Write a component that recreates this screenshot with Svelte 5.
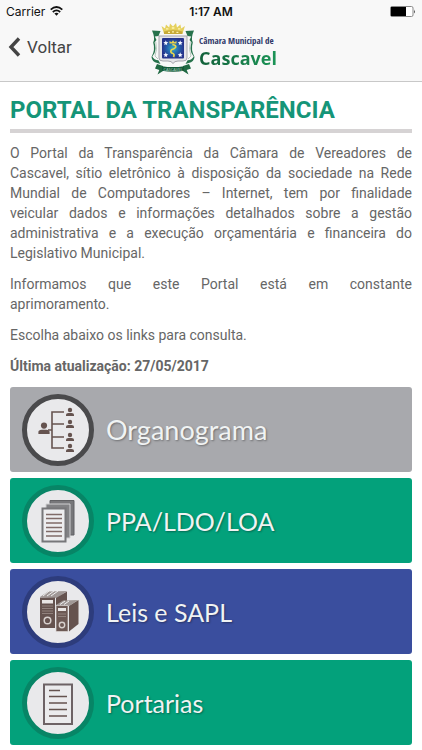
<script lang="ts">
  type Section = {
    id: 'orgchart' | 'pages' | 'binders' | 'sheet';
    label: string;
    tone: 'gray' | 'green' | 'blue';
  };

  const sections: Section[] = [
    { id: 'orgchart', label: 'Organograma', tone: 'gray' },
    { id: 'pages', label: 'PPA/LDO/LOA', tone: 'green' },
    { id: 'binders', label: 'Leis e SAPL', tone: 'blue' },
    { id: 'sheet', label: 'Portarias', tone: 'green' }
  ];

  const people = [
    [44, 8],
    [44, 20],
    [44, 33],
    [44, 44]
  ];
</script>

{#snippet person(x: number, y: number, scale: number)}
  <g transform="translate({x} {y}) scale({scale})">
    <circle cx="0" cy="4" r="2.2" />
    <path d="M-4 10V8.6Q-4 7.2-1.6 7H1.6Q4 7.2 4 8.6V10Z" />
  </g>
{/snippet}

<header>
  <div class="status">
    <div class="carrier">
      <span>Carrier</span>
      <svg width="13" height="10" viewBox="0 0 13 10" aria-hidden="true">
        <g fill="none" stroke="#111" stroke-width="1.7">
          <path d="M.7 3.7Q6.5-1.7 12.3 3.7" />
          <path d="M2.8 6Q6.5 2.6 10.2 6" />
        </g>
        <path d="M4.4 7.5Q6.5 5.9 8.6 7.5L6.5 9.7Z" fill="#111" />
      </svg>
    </div>
    <time>1:17 AM</time>
    <svg class="battery" width="26" height="11" viewBox="0 0 26 11" aria-hidden="true">
      <rect x=".5" y=".5" width="22.5" height="10" rx="1.5" fill="#fff" stroke="#888" />
      <rect x="1" y="1" width="15" height="9" fill="#000" />
      <path d="M24 3.5Q25.5 5.5 24 7.5Z" fill="#333" />
    </svg>
  </div>

  <nav>
    <button type="button" class="back">
      <svg width="13" height="20" viewBox="0 0 13 20" aria-hidden="true">
        <path d="M11 1.5 3 10l8 8.5" fill="none" stroke="#444" stroke-width="3.4" />
      </svg>
      <span>Voltar</span>
    </button>

    <div class="brand">
      <svg width="44" height="54" viewBox="0 0 44 54" aria-hidden="true">
        <defs>
          <radialGradient id="shield">
            <stop offset="0" stop-color="#35b3c4" />
            <stop offset=".55" stop-color="#2463ad" />
            <stop offset="1" stop-color="#25338c" />
          </radialGradient>
        </defs>
        <!-- mural crown -->
        <path d="M10.5 4 14 6.5 15 2.5 18.2 5.5 19 1.5 22 4.5 25 1 26 5.5 29.4 2.5 30.2 6.5 34 4 31.5 11.5H13Z" fill="#e5d05d" />
        <path d="M13 9.5Q22 7 31.4 9.5V12H13Z" fill="#c7aa38" />
        <path d="M15 6.8h2.4M20.8 6h2.6M27 6.8h2.4M17 10.3h2M21 9.8h2M25.4 10.3h2" stroke="#fff4ad" stroke-width="1.3" />
        <!-- side ribbons -->
        <path d="M1 8.5 9.5 9 7.5 14 3.8 14.5 5.5 18 3.5 20.5Q5.5 26 3.6 31L1.3 34.5Q3 38 7.4 38.3L9.5 42 6.3 41Q1 40 .5 35 4.5 28 2.2 20.5Q4.5 16 1 8.5Z" fill="#27724c" />
        <path d="M43 8.5 34.5 9 36.5 14 40.2 14.5 38.5 18 40.5 20.5Q38.5 26 40.4 31L42.7 34.5Q41 38 36.6 38.3L34.5 42 37.7 41Q43 40 43.5 35 39.5 28 41.8 20.5Q39.5 16 43 8.5Z" fill="#27724c" />
        <path d="M4.8 20Q6.5 28 4 34L7 37M39.2 20Q37.5 28 40 34L37 37" fill="none" stroke="#b7c9be" />
        <!-- shield -->
        <path d="M8 14H36V36Q36 39 32 39H27Q23.5 39 22 41.5Q20.5 39 17 39H12Q8 39 8 36Z" fill="#e4e4e8" stroke="#a6a6ad" />
        <rect x="11" y="16" width="22" height="20.5" rx="1" fill="url(#shield)" />
        <path d="M14.8 18.2 15.5 20 17.3 20.3 15.9 21.4 16.2 23.2 14.8 22.2 13.3 23.2 13.7 21.4 12.3 20.3 14.1 20ZM29.2 18.2 29.9 20 31.7 20.3 30.3 21.4 30.6 23.2 29.2 22.2 27.7 23.2 28.1 21.4 26.7 20.3 28.5 20ZM14.8 30.3 15.5 32.1 17.3 32.4 15.9 33.5 16.2 35.3 14.8 34.3 13.3 35.3 13.7 33.5 12.3 32.4 14.1 32.1ZM29.2 30.3 29.9 32.1 31.7 32.4 30.3 33.5 30.6 35.3 29.2 34.3 27.7 35.3 28.1 33.5 26.7 32.4 28.5 32.1Z" fill="#f2f6ff" />
        <path d="M18.5 21.5V19L20.5 20.3 22 18.2 23.5 20.3 25.5 19V21.5Z" fill="#ead24a" />
        <path d="M21.3 22.5Q25.7 23.2 24.5 25.5 23 27 20.5 27.8 18.8 30 21.3 31.2 24 32 22.5 35" fill="none" stroke="#e9d74c" stroke-width="1.7" />
        <!-- motto scroll -->
        <path d="M6 42 12 44V49L6.5 52.5 8.3 48 4 46.5ZM38 42 32 44V49L37.5 52.5 35.7 48 40 46.5Z" fill="#206943" />
        <path d="M11 44.2Q22 46 33 44.2V48.8Q22 50.5 11 48.8Z" fill="#155a39" />
        <text x="22" y="48.7" text-anchor="middle">CASCAVEL</text>
      </svg>
      <div class="brand-name">
        <span class="chamber">Câmara Municipal de</span>
        <strong>Cascavel</strong>
      </div>
    </div>
  </nav>
</header>

<main>
  <h1>PORTAL DA TRANSPARÊNCIA</h1>
  <p>
    O Portal da Transparência da Câmara de Vereadores de Cascavel, sítio eletrônico à disposição da
    sociedade na Rede Mundial de Computadores – Internet, tem por finalidade veicular&nbsp;dados e
    informações detalhados sobre a gestão administrativa e a execução orçamentária e financeira do
    Legislativo Municipal.
  </p>
  <p>
    <span class="full-line">Informamos que este Portal está em constante</span>
    aprimoramento.
  </p>
  <p>Escolha abaixo os links para consulta.</p>
  <p><b>Última atualização: 27/05/2017</b></p>

  <div class="sections">
    {#each sections as section}
      <a href="#{section.id}" class="card {section.tone}">
        <span class="badge">
          <svg width="62" height="62" viewBox="1 1 62 62" aria-hidden="true">
            {#if section.id === 'orgchart'}
              <g fill="#65534f">
                {@render person(18, 22, 1.4)}
                {#each people as [x, y]}
                  {@render person(x, y, 1)}
                {/each}
              </g>
              <path d="M38 14H26V50H38M22 32H26M26 26H38M26 39H38" fill="none" stroke="#65534f" stroke-width="1.6" />
            {:else if section.id === 'pages'}
              <path d="M24 11.5H48V46H24Z" fill="#77777a" stroke="#616164" />
              <path d="M20 15H44V49H20Z" fill="#828285" stroke="#d0d0d2" />
              <path d="M16.5 19.5H39.5V52.5H16.5Z" fill="#ededef" stroke="#77777a" stroke-width="2" />
              <path d="M20 25.5H36M20 29.5H36M20 34H36M20 38.5H36M20 42.5H36M20 47H36" stroke="#806b68" stroke-width="1.3" />
            {:else if section.id === 'binders'}
              <path d="M14 17 22 11.5 41 11 31 18Z" fill="#a09896" />
              <path d="M17 16 23 11M21 16 28 11M25 16 32 11" stroke="#eee" />
              <path d="M14 17.5H29V48H14Z" fill="#65534f" />
              <path d="M30 18 41 11.5V23L33 27V48H30Z" fill="#65534f" />
              <path d="M16 20H27V23.5H16Z" fill="#e8e5e4" />
              <path d="M16 26H27M16 28.5H27M16 31H27M16 33.5H27" stroke="#91827d" />
              <circle cx="21.5" cy="40.5" r="3.3" fill="none" stroke="#d7d0cd" stroke-width="1.5" />
              <path d="M30 25 37 20.5 52 20 43 26Z" fill="#a09896" />
              <path d="M34 24.5 39 21M38 24.5 43 21" stroke="#eee" />
              <path d="M30 25.5H42V51.5H30Z" fill="#6c5954" stroke="#dcd8d7" stroke-width=".7" />
              <path d="M43 26 52.5 20V44L43 51.5Z" fill="#65534f" />
              <path d="M32 28H40V31H32Z" fill="#e8e5e4" />
              <path d="M32 34H40M32 36.5H40" stroke="#91827d" />
              <circle cx="36" cy="45" r="2.7" fill="none" stroke="#d7d0cd" stroke-width="1.4" />
            {:else}
              <path d="M18 13.5H46V53H18Z" fill="#ebebed" stroke="#6d6265" stroke-width="2" />
              <path d="M23 19.5H34M23 25.5H41M23 32H41M23 38.5H41M23 45H41" stroke="#65534f" stroke-width="1.7" />
            {/if}
          </svg>
        </span>
        <span class="label">{section.label}</span>
      </a>
    {/each}
  </div>
</main>

<style>
  :global(body) {
    background: #fff;
    color: #666;
    font-family: Roboto, sans-serif;
    font-size: 14px;
  }

  header {
    background: #f8f8f8;
    border-bottom: 1px solid #c8c8c8;
  }

  .status {
    height: 22px;
    padding: 0 6px;
    display: grid;
    grid-template-columns: 1fr auto 1fr;
    align-items: center;
    color: #111;
    font-family: Inter, sans-serif;
    font-size: 12px;
  }

  .carrier {
    display: flex;
    align-items: center;
    gap: 5px;
  }

  time {
    font-weight: 600;
  }

  .battery {
    justify-self: end;
  }

  nav {
    height: 59px;
    padding: 0 2px 0 8px;
    display: grid;
    grid-template-columns: 1fr auto 1fr;
    align-items: start;
  }

  .back {
    height: 50px;
    padding: 0;
    border: 0;
    background: transparent;
    display: flex;
    align-items: center;
    gap: 6px;
    color: #444;
    font-family: inherit;
    font-size: 17px;
    cursor: pointer;
  }

  .brand {
    display: flex;
    align-items: center;
    gap: 4px;
  }

  .brand text {
    fill: #b8dcc9;
    font-family: 'Open Sans', sans-serif;
    font-size: 4px;
  }

  .brand-name {
    padding-top: 6px;
    display: flex;
    flex-direction: column;
    gap: 2px;
    white-space: nowrap;
  }

  .chamber {
    color: #2f3768;
    font-family: 'Open Sans Condensed', 'Roboto Condensed', Lato, sans-serif;
    font-size: 9px;
    font-weight: 700;
    line-height: 10px;
  }

  .brand strong {
    background: linear-gradient(90deg, #12603a, #1c9557);
    background-clip: text;
    color: transparent;
    font-family: 'Open Sans', sans-serif;
    font-size: 18px;
    line-height: 20px;
  }

  main {
    padding: 12px 10px 6px;
  }

  h1 {
    margin: 0 0 10px;
    padding-bottom: 3px;
    border-bottom: 4px solid #d6d3d4;
    color: #159578;
    font-size: 24px;
    font-weight: 700;
    line-height: 32px;
  }

  p {
    margin: 0 0 11px;
    line-height: 20px;
    text-align: justify;
  }

  .full-line {
    display: block;
    text-align-last: justify;
  }

  .sections {
    display: grid;
    gap: 6px;
  }

  .card {
    height: 85px;
    padding: 0 12px;
    border-radius: 3px;
    display: flex;
    align-items: center;
    gap: 12px;
    color: #f0f3f3;
    text-decoration: none;
  }

  .gray {
    background: #a8a9ad;
    --ring: #4a4a4c;
  }

  .green {
    background: #03a17b;
    --ring: #078566;
  }

  .blue {
    background: #3a4e9e;
    --ring: #2d3c7c;
  }

  .badge {
    display: flex;
    border: 5px solid var(--ring);
    border-radius: 50%;
    background: #e9e9eb;
  }

  .label {
    font-family: Lato, sans-serif;
    font-size: 25px;
    text-shadow: 1px 1px 2px rgb(0 0 0 / 35%);
  }

  .gray .label {
    font-size: 27px;
  }
</style>
